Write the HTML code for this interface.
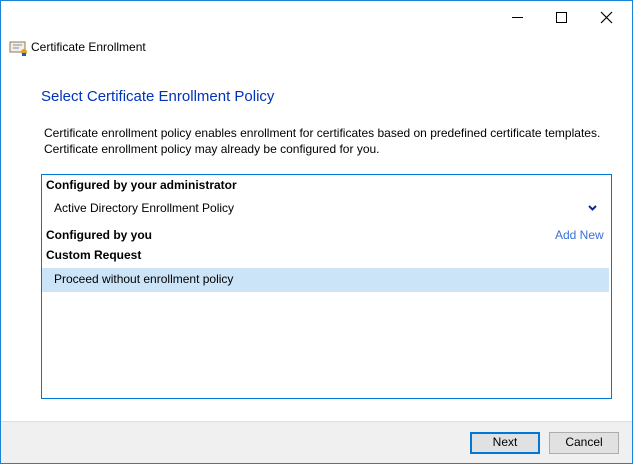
<!DOCTYPE html>
<html><head><style>
*{margin:0;padding:0;box-sizing:border-box}
body{width:634px;height:466px;background:#fff;font-family:"Segoe UI","Liberation Sans",sans-serif;font-size:12px;color:#000;position:relative;overflow:hidden}
.win{position:absolute;left:0;top:0;width:633px;height:464px;border:1px solid #1883d7;background:#fff}
.t{position:absolute;white-space:nowrap}
.foot{position:absolute;left:0;top:420px;width:631px;height:42px;background:#f0f0f0;border-top:1px solid #dfdfdf}
.btn{position:absolute;top:10px;height:22px;background:#e1e1e1;border:1px solid #adadad;text-align:center;line-height:19px;font-size:12px}
</style></head><body>
<div class="win">
 <svg style="position:absolute;left:500px;top:5px" width="120" height="20">
  <line x1="11" y1="11.5" x2="22" y2="11.5" stroke="#000"/>
  <rect x="55.5" y="6.5" width="10" height="10" fill="none" stroke="#000"/>
  <path d="M100 6 L111 17 M111 6 L100 17" stroke="#000" stroke-width="1.2"/>
 </svg>
 <svg style="position:absolute;left:8px;top:40px" width="18" height="16"><rect x="1" y="1" width="15" height="10" fill="#f5efe0" stroke="#8a7a5a"/><line x1="4" y1="4" x2="13" y2="4" stroke="#7a8ac8"/><line x1="4" y1="7" x2="10" y2="7" stroke="#7a8ac8"/><circle cx="15" cy="11" r="3" fill="#e0a020"/><rect x="13" y="12" width="4" height="3" fill="#3050c0"/></svg>
 <div class="t" style="left:30px;top:39px;font-size:12px">Certificate Enrollment</div>
 <div class="t" style="left:40px;top:87px;font-size:15px;color:#0033bc">Select Certificate Enrollment Policy</div>
 <div class="t" style="left:43px;top:125px">Certificate enrollment policy enables enrollment for certificates based on predefined certificate templates.</div>
 <div class="t" style="left:43px;top:141px">Certificate enrollment policy may already be configured for you.</div>
 <div style="position:absolute;left:40px;top:173px;width:571px;height:225px;border:1px solid #0078d7">
  <div class="t" style="left:4px;top:3px;font-weight:bold">Configured by your administrator</div>
  <div class="t" style="left:12px;top:26px">Active Directory Enrollment Policy</div>
  <svg style="position:absolute;left:546px;top:30px" width="9" height="6"><path d="M1 1 L4.5 4.5 L8 1" fill="none" stroke="#0a2a8a" stroke-width="2"/></svg>
  <div class="t" style="left:4px;top:53px;font-weight:bold">Configured by you</div>
  <div class="t" style="left:513px;top:53px;color:#3b6fd8">Add New</div>
  <div class="t" style="left:4px;top:73px;font-weight:bold">Custom Request</div>
  <div style="position:absolute;left:0;top:93px;width:567px;height:24px;background:#cce4f7"></div>
  <div class="t" style="left:12px;top:97px">Proceed without enrollment policy</div>
 </div>
 <div class="foot">
  <div class="btn" style="left:469px;width:70px;border:2px solid #0078d7;line-height:17px">Next</div>
  <div class="btn" style="left:548px;width:70px">Cancel</div>
 </div>
</div>
</body></html>
